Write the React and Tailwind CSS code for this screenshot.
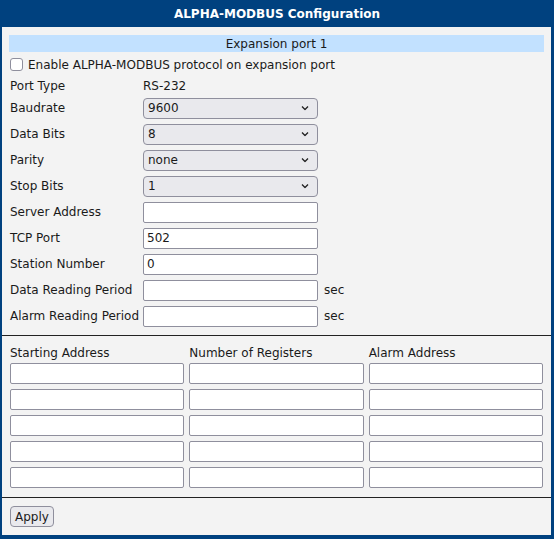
import React from 'react';

const font = { fontFamily: '"DejaVu Sans", Verdana, sans-serif' };

const Chevron = () => (
  <svg className="pointer-events-none absolute right-[9px] top-1/2 -translate-y-1/2" width="8" height="5" viewBox="0 0 8 5">
    <path d="M1 1l3 3 3-3" fill="none" stroke="#222" strokeWidth="1.3" />
  </svg>
);

const Select = ({ value }) => (
  <div className="relative w-[175px] h-[21px]">
    <select
      defaultValue={value}
      className="w-full h-full appearance-none rounded-[4px] border border-[#8f8f9d] bg-[#e9e9ed] pl-[4px] text-[12px] text-[#1a1a1a] outline-none"
      style={font}
    >
      <option>{value}</option>
    </select>
    <Chevron />
  </div>
);

const Input = ({ value = '', className = 'w-[175px]' }) => (
  <input
    defaultValue={value}
    className={`${className} h-[21px] rounded-[2px] border border-[#8f8f9d] bg-white px-[3px] text-[12px] text-[#1a1a1a] outline-none`}
    style={font}
  />
);

const Row = ({ label, children, unit }) => (
  <div className="flex items-center h-[26px] pl-px">
    <div className="w-[133px] shrink-0 whitespace-nowrap">{label}</div>
    {children}
    {unit && <span className="ml-[6px]">{unit}</span>}
  </div>
);

export default function App() {
  const rows = [0, 1, 2, 3, 4];
  return (
    <div className="w-[554px] h-[539px] bg-[#00417f] text-[12px] text-[#1a1a1a]" style={font}>
      <div className="h-[27px] flex items-center justify-center text-white font-bold text-[12px]">
        ALPHA-MODBUS Configuration
      </div>
      <div className="ml-[2px] mr-[3px] h-[508px] bg-[#f3f3f3]">
        <div className="px-[7px] pt-[8px]">
          <div className="h-[17px] bg-[#c2e1ff] flex items-center justify-center">Expansion port 1</div>
          <div className="h-[25px] flex items-center pl-px">
            <span className="w-[13px] h-[13px] rounded-[3px] border border-[#8f8f9d] bg-white mr-[5px]" />
            Enable ALPHA-MODBUS protocol on expansion port
          </div>
          <div className="h-[18px] flex items-center pl-px">
            <div className="w-[133px]">Port Type</div>
            <div>RS-232</div>
          </div>
          <Row label="Baudrate"><Select value="9600" /></Row>
          <Row label="Data Bits"><Select value="8" /></Row>
          <Row label="Parity"><Select value="none" /></Row>
          <Row label="Stop Bits"><Select value="1" /></Row>
          <Row label="Server Address"><Input /></Row>
          <Row label="TCP Port"><Input value="502" /></Row>
          <Row label="Station Number"><Input value="0" /></Row>
          <Row label="Data Reading Period" unit="sec"><Input /></Row>
          <Row label="Alarm Reading Period" unit="sec"><Input /></Row>
        </div>
        <div className="mt-[6px] border-t border-[#222]" />
        <div className="px-[8px] pt-[8px] pb-[9px]">
          <div className="grid grid-cols-3 gap-x-[5px] h-[18px] items-center mb-px">
            <div>Starting Address</div>
            <div>Number of Registers</div>
            <div>Alarm Address</div>
          </div>
          <div className="grid grid-cols-3 gap-x-[5px] gap-y-[5px]">
            {rows.map((r) => (
              <React.Fragment key={r}>
                <Input className="w-full" />
                <Input className="w-full" />
                <Input className="w-full" />
              </React.Fragment>
            ))}
          </div>
        </div>
        <div className="border-t border-[#222]" />
        <div className="px-[8px] pt-[8px]">
          <button
            className="h-[21px] px-[4px] rounded-[4px] border border-[#8f8f9d] bg-[#e9e9ed] text-[12px] text-[#1a1a1a]"
            style={font}
          >
            Apply
          </button>
        </div>
      </div>
    </div>
  );
}
